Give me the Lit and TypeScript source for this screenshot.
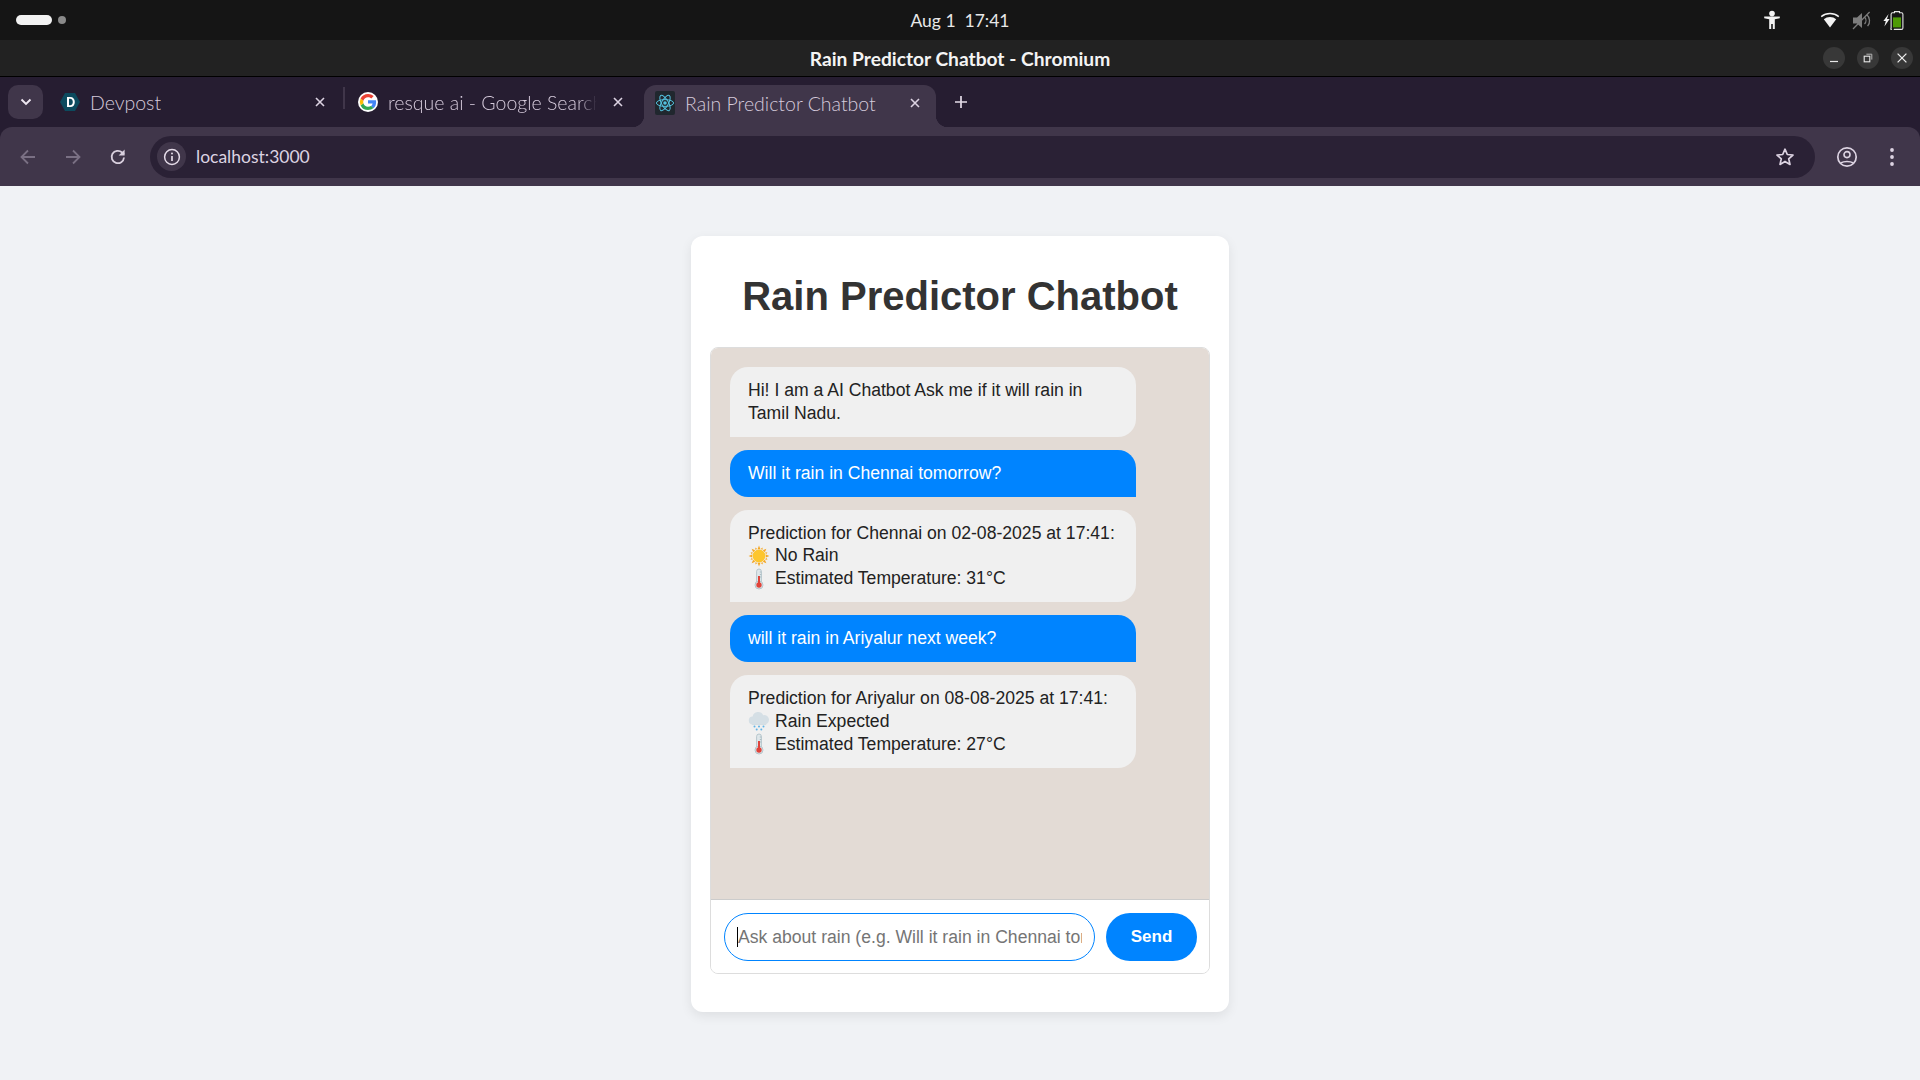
import { LitElement, html, css, svg } from 'lit';
import { customElement } from 'lit/decorators.js';

const sun = html`<svg class="emoji" viewBox="0 0 22 22">
  <g fill="#f5a623">
    ${[0, 45, 90, 135, 180, 225, 270, 315].map(
      a => svg`<path transform="rotate(${a} 11 11)" d="M9.6 4.2 11 .6l1.4 3.6z" />`
    )}
    ${[22, 67, 112, 157, 202, 247, 292, 337].map(
      a => svg`<path transform="rotate(${a} 11 11)" d="M9.9 3.8 11 1.8l1.1 2z" />`
    )}
  </g>
  <circle cx="11" cy="11" r="6.4" fill="#fdc62e" />
</svg>`;

const thermometer = html`<svg class="emoji" viewBox="0 0 22 22">
  <rect x="8.6" y="1" width="4.8" height="15" rx="2.4" fill="#dfe7ea" stroke="#a9bcc4" stroke-width=".8" />
  <circle cx="11" cy="17" r="4" fill="#dfe7ea" stroke="#a9bcc4" stroke-width=".8" />
  <rect x="10" y="8" width="2" height="8" fill="#e0433a" />
  <circle cx="11" cy="17" r="2.7" fill="#e0433a" />
  <path d="M13.2 4h-1.4M13.2 6.5h-1.4M13.2 9h-1.4" stroke="#8fa3ac" stroke-width=".6" />
</svg>`;

const rain = html`<svg class="emoji" viewBox="0 0 22 22">
  <path d="M5 14.5a4 4 0 0 1-.4-8 5.6 5.6 0 0 1 10.6-1.3 4.7 4.7 0 0 1 2 9.3z" fill="#d5dfe5" />
  <path d="M5 14.5a4 4 0 0 1-1.4-.3h15a4.7 4.7 0 0 1-1.4.3z" fill="#a9bcc6" />
  <g fill="#5fb3e6">
    <circle cx="6.5" cy="16.6" r="1" /><circle cx="11" cy="16.6" r="1" /><circle cx="15.5" cy="16.6" r="1" />
    <circle cx="8.7" cy="19.6" r="1" /><circle cx="13.3" cy="19.6" r="1" />
  </g>
</svg>`;

@customElement('browser-chrome')
export class BrowserChrome extends LitElement {
  static styles = css`
    :host {
      display: block;
      font-family: Lato, 'Noto Sans', sans-serif;
      color: #fff;
      background: #261d31;
    }
    * {
      box-sizing: border-box;
    }
    svg {
      display: block;
      flex: none;
    }
    .system-bar {
      height: 40px;
      background: #151515;
      display: grid;
      grid-template-columns: 1fr auto 1fr;
      align-items: center;
      padding: 0 16px;
    }
    .pager {
      display: flex;
      align-items: center;
      gap: 6px;
    }
    .pager__active {
      width: 36px;
      height: 10px;
      border-radius: 5px;
      background: #f2f2f2;
    }
    .pager__dot {
      width: 8px;
      height: 8px;
      border-radius: 50%;
      background: #8a8a8a;
    }
    .clock {
      font-size: 17.5px;
      white-space: pre;
      color: #e8e8e8;
    }
    .tray {
      display: flex;
      justify-content: flex-end;
      align-items: center;
    }
    .tray__a11y {
      margin-right: 39px;
    }
    .tray__wifi,
    .tray__volume {
      margin-right: 12px;
    }
    .title-bar {
      height: 37px;
      background: #222222;
      border-bottom: 1px solid #000;
      display: grid;
      grid-template-columns: 1fr auto 1fr;
      align-items: center;
      padding: 0 7px;
    }
    .title-bar__text {
      font-size: 19.2px;
      font-weight: 700;
      color: #f4f4f4;
    }
    .window-buttons {
      display: flex;
      justify-content: flex-end;
      gap: 12px;
    }
    .window-buttons span {
      width: 22px;
      height: 22px;
      border-radius: 50%;
      background: #383838;
      display: flex;
      align-items: center;
      justify-content: center;
    }
    .tab-strip {
      height: 50px;
      display: flex;
      align-items: flex-end;
      padding-left: 8px;
      color: #d5cadb;
    }
    .tab-list {
      width: 35px;
      height: 34px;
      margin: 0 9px 8px 0;
      border-radius: 10px;
      background: #40364a;
      display: flex;
      align-items: center;
      justify-content: center;
    }
    .tab {
      height: 42px;
      display: flex;
      align-items: center;
      font-size: 19.5px;
      font-weight: 300;
      padding-bottom: 8px;
      position: relative;
      white-space: nowrap;
    }
    .tab__label {
      margin-left: 10px;
      overflow: hidden;
    }
    .tab__close {
      margin-left: auto;
    }
    .tab--devpost {
      width: 291px;
      padding-left: 8px;
      padding-right: 17px;
    }
    .separator {
      width: 2px;
      height: 22px;
      margin-bottom: 18px;
      background: #40364a;
    }
    .tab--google {
      width: 287px;
      padding-left: 13px;
      padding-right: 8px;
    }
    .tab--google .tab__label {
      width: 209px;
      -webkit-mask-image: linear-gradient(90deg, #000 190px, transparent 209px);
      mask-image: linear-gradient(90deg, #000 190px, transparent 209px);
    }
    .tab--active {
      width: 292px;
      margin-left: 12px;
      padding-left: 11px;
      padding-right: 15px;
      padding-bottom: 6px;
      background: #40364a;
      border-radius: 12px 12px 0 0;
    }
    /* little flares where the active tab meets the toolbar */
    .tab--active::before,
    .tab--active::after {
      content: '';
      position: absolute;
      bottom: 0;
      width: 12px;
      height: 12px;
    }
    .tab--active::before {
      left: -12px;
      background: radial-gradient(circle at 0 0, transparent 12px, #40364a 12.5px);
    }
    .tab--active::after {
      right: -12px;
      background: radial-gradient(circle at 100% 0, transparent 12px, #40364a 12.5px);
    }
    .new-tab {
      margin: 0 0 18px 18px;
    }
    .toolbar {
      height: 59px;
      background: #40364a;
      border-radius: 12px 12px 0 0;
      display: flex;
      align-items: center;
      padding-left: 18px;
    }
    .nav {
      display: flex;
      align-items: center;
      gap: 25px;
      margin-right: 22px;
    }
    .omnibox {
      flex: 1;
      height: 42px;
      border-radius: 21px;
      background: #2a2135;
      display: flex;
      align-items: center;
      padding: 0 20px 0 7px;
      font-size: 17.5px;
      color: #dcd3e2;
    }
    .omnibox__info {
      width: 29px;
      height: 29px;
      border-radius: 50%;
      background: #40364a;
      display: flex;
      align-items: center;
      justify-content: center;
      margin-right: 10px;
    }
    .omnibox__url {
      flex: 1;
    }
    .actions {
      display: flex;
      align-items: center;
      gap: 31px;
      padding: 0 25px 0 21px;
    }
  `;

  private get systemBar() {
    return html`<div class="system-bar">
      <div class="pager">
        <span class="pager__active"></span><span class="pager__dot"></span>
      </div>
      <div class="clock">Aug 1  17:41</div>
      <div class="tray">
        <svg class="tray__a11y" width="18" height="20" viewBox="0 0 18 20">
          <circle cx="9" cy="3.6" r="2.8" fill="#f2f2f2" />
          <path
            d="M1.2 6.6h15.6v1.7l-5 .9v9.8H9.8v-5H8.2v5H6.2V9.2l-5-.9z"
            fill="#f2f2f2"
          />
        </svg>
        <svg class="tray__wifi" width="20" height="16" viewBox="0 0 20 16">
          <path d="M10 15.4 3.8 7.2a10 10 0 0 1 12.4 0z" fill="#f2f2f2" />
          <path
            d="M1.2 4.6a14 14 0 0 1 17.6 0"
            fill="none"
            stroke="#f2f2f2"
            stroke-width="1.4"
          />
        </svg>
        <svg class="tray__volume" width="19" height="19" viewBox="0 0 19 19">
          <path d="M1 6.5h4L10 2v15l-5-4.5H1z" fill="#7d7d7d" />
          <path
            d="M12.5 6a5 5 0 0 1 0 7M14.6 3.6a8.2 8.2 0 0 1 1 11.6M1 18 17.6 1"
            fill="none"
            stroke="#7d7d7d"
            stroke-width="1.3"
          />
        </svg>
        <svg width="21" height="20" viewBox="0 0 21 20">
          <path d="M5.6 4 .4 11h2.4l-1.4 5.6L6.6 9H4z" fill="#f2f2f2" />
          <path
            d="M11.5 2.8V1.6h5v1.2h2a1.4 1.4 0 0 1 1.4 1.4V18a1.4 1.4 0 0 1-1.4 1.4h-7A1.4 1.4 0 0 1 8.1 18V4.2a1.4 1.4 0 0 1 1.4-1.4z"
            fill="none"
            stroke="#e6e6e6"
            stroke-width="1.1"
          />
          <rect x="10" y="7.4" width="8" height="10" fill="#4e9a06" />
        </svg>
      </div>
    </div>`;
  }

  private get titleBar() {
    return html`<div class="title-bar">
      <span></span>
      <div class="title-bar__text">Rain Predictor Chatbot - Chromium</div>
      <div class="window-buttons">
        <span>
          <svg width="10" height="10" viewBox="0 0 10 10">
            <path d="M1 8.5h8" stroke="#e8e8e8" stroke-width="1.2" />
          </svg>
        </span>
        <span>
          <svg width="10" height="10" viewBox="0 0 10 10">
            <path d="M3.4 1.2h5.4v5.4" fill="none" stroke="#b5b5b5" stroke-width="1" />
            <rect x="1.2" y="3.2" width="5.6" height="5.6" fill="none" stroke="#e8e8e8" stroke-width="1.1" />
          </svg>
        </span>
        <span>
          <svg width="12" height="12" viewBox="0 0 12 12">
            <path d="M1.6 1.6l8.8 8.8M10.4 1.6l-8.8 8.8" stroke="#ececec" stroke-width="1.3" />
          </svg>
        </span>
      </div>
    </div>`;
  }

  private closeIcon() {
    return html`<svg class="tab__close" width="12" height="12" viewBox="0 0 12 12">
      <path d="M2 2l8 8M10 2l-8 8" stroke="#dcd3e2" stroke-width="1.6" />
    </svg>`;
  }

  private get tabStrip() {
    return html`<div class="tab-strip">
      <div class="tab-list">
        <svg width="12" height="8" viewBox="0 0 12 8">
          <path d="M1.5 1.5 6 6l4.5-4.5" fill="none" stroke="#efe8f2" stroke-width="1.9" />
        </svg>
      </div>
      <div class="tab tab--devpost">
        <svg width="20" height="20" viewBox="0 0 20 20">
          <path d="M5 1h10l5 9-5 9H5l-5-9z" fill="#0c4a5e" />
          <path
            d="M7 5h3.2c3 0 4.6 2 4.6 5s-1.6 5-4.6 5H7zm2 1.8v6.4h1.2c1.7 0 2.6-1.3 2.6-3.2s-.9-3.2-2.6-3.2z"
            fill="#fff"
          />
        </svg>
        <span class="tab__label">Devpost</span>
        ${this.closeIcon()}
      </div>
      <div class="separator"></div>
      <div class="tab tab--google">
        <svg width="20" height="20" viewBox="0 0 20 20">
          <circle cx="10" cy="10" r="10" fill="#fff" />
          <path d="M10 8.3v3.3h4.6a4 4 0 0 1-1.7 2.6l2.7 2.1c1.6-1.5 2.5-3.6 2.5-6.1 0-.6 0-1.3-.2-1.9z" fill="#4285f4" />
          <path d="M5.4 11.3l-.6.5-2.2 1.7A8.3 8.3 0 0 0 10 18.1c2.2 0 4.1-.7 5.6-2l-2.7-2.1c-.7.5-1.7.8-2.9.8a5 5 0 0 1-4.6-3.5z" fill="#34a853" />
          <path d="M2.6 6.5a8.3 8.3 0 0 0 0 7l2.8-2.2a5 5 0 0 1 0-2.6z" fill="#fbbc05" />
          <path d="M10 5.2c1.3 0 2.4.4 3.3 1.3l2.4-2.4A8.1 8.1 0 0 0 10 1.9a8.3 8.3 0 0 0-7.4 4.6l2.8 2.2A5 5 0 0 1 10 5.2z" fill="#ea4335" />
        </svg>
        <span class="tab__label">resque ai - Google Search</span>
        ${this.closeIcon()}
      </div>
      <div class="tab tab--active">
        <svg width="20" height="24" viewBox="0 0 20 24">
          <rect width="20" height="24" rx="2" fill="#20272e" />
          <g fill="none" stroke="#53c1de" stroke-width="1">
            <ellipse cx="10" cy="12" rx="8.6" ry="3.4" />
            <ellipse cx="10" cy="12" rx="8.6" ry="3.4" transform="rotate(60 10 12)" />
            <ellipse cx="10" cy="12" rx="8.6" ry="3.4" transform="rotate(120 10 12)" />
          </g>
          <circle cx="10" cy="12" r="1.8" fill="#53c1de" />
        </svg>
        <span class="tab__label">Rain Predictor Chatbot</span>
        ${this.closeIcon()}
      </div>
      <div class="new-tab">
        <svg width="14" height="14" viewBox="0 0 14 14">
          <path d="M7 1v12M1 7h12" stroke="#e4dbe8" stroke-width="1.7" />
        </svg>
      </div>
    </div>`;
  }

  private get toolbar() {
    return html`<div class="toolbar">
      <div class="nav">
        <svg width="20" height="20" viewBox="0 0 20 20">
          <path d="M17 10H4M10 3.5 3.5 10l6.5 6.5" fill="none" stroke="#7a7084" stroke-width="1.8" />
        </svg>
        <svg width="20" height="20" viewBox="0 0 20 20">
          <path d="M3 10h13M10 3.5l6.5 6.5-6.5 6.5" fill="none" stroke="#7a7084" stroke-width="1.8" />
        </svg>
        <svg width="20" height="20" viewBox="0 0 20 20">
          <path d="M16 10.5a6.2 6.2 0 1 1-1.9-5L16 7.4" fill="none" stroke="#d9d0de" stroke-width="1.8" />
          <path d="M16.6 2.4v6h-6z" fill="#d9d0de" />
        </svg>
      </div>
      <div class="omnibox">
        <div class="omnibox__info">
          <svg width="18" height="18" viewBox="0 0 18 18">
            <circle cx="9" cy="9" r="7.4" fill="none" stroke="#e4dbe8" stroke-width="1.5" />
            <path d="M9 8v5" stroke="#e4dbe8" stroke-width="1.7" />
            <circle cx="9" cy="5.4" r="1" fill="#e4dbe8" />
          </svg>
        </div>
        <div class="omnibox__url">localhost:3000</div>
        <svg width="20" height="20" viewBox="0 0 20 20">
          <path
            d="M10 2.2l2.3 5.3 5.7.5-4.3 3.8 1.3 5.6-5-3-5 3 1.3-5.6L2 8l5.7-.5z"
            fill="none"
            stroke="#dcd3e2"
            stroke-width="1.7"
            stroke-linejoin="round"
          />
        </svg>
      </div>
      <div class="actions">
        <svg width="22" height="22" viewBox="0 0 22 22">
          <circle cx="11" cy="11" r="9.2" fill="none" stroke="#dcd3e2" stroke-width="1.7" />
          <circle cx="11" cy="8.6" r="3" fill="none" stroke="#dcd3e2" stroke-width="1.6" />
          <path d="M4.6 17a9 5 0 0 1 12.8 0" fill="none" stroke="#dcd3e2" stroke-width="1.6" />
        </svg>
        <svg width="6" height="20" viewBox="0 0 6 20">
          <circle cx="3" cy="3" r="1.9" fill="#dcd3e2" />
          <circle cx="3" cy="10" r="1.9" fill="#dcd3e2" />
          <circle cx="3" cy="17" r="1.9" fill="#dcd3e2" />
        </svg>
      </div>
    </div>`;
  }

  render() {
    return html`${this.systemBar} ${this.titleBar} ${this.tabStrip} ${this.toolbar}`;
  }
}

type Message = { from: 'bot' | 'user'; lines: unknown[] };

const MESSAGES: Message[] = [
  { from: 'bot', lines: ['Hi! I am a AI Chatbot Ask me if it will rain in Tamil Nadu.'] },
  { from: 'user', lines: ['Will it rain in Chennai tomorrow?'] },
  {
    from: 'bot',
    lines: [
      'Prediction for Chennai on 02-08-2025 at 17:41:',
      html`${sun}<span>No Rain</span>`,
      html`${thermometer}<span>Estimated Temperature: 31°C</span>`,
    ],
  },
  { from: 'user', lines: ['will it rain in Ariyalur next week?'] },
  {
    from: 'bot',
    lines: [
      'Prediction for Ariyalur on 08-08-2025 at 17:41:',
      html`${rain}<span>Rain Expected</span>`,
      html`${thermometer}<span>Estimated Temperature: 27°C</span>`,
    ],
  },
];

@customElement('app-root')
export class AppRoot extends LitElement {
  static styles = css`
    :host {
      display: flex;
      flex-direction: column;
      min-height: 100vh;
      background: #f0f2f5;
      font-family: 'Liberation Sans', Arial, sans-serif;
    }
    * {
      box-sizing: border-box;
    }
    main {
      display: flex;
      justify-content: center;
      padding-top: 50px;
    }
    .card {
      width: 538px;
      height: 776px;
      padding: 0 19px 38px;
      background: #fff;
      border-radius: 12px;
      box-shadow: 0 4px 12px rgba(0, 0, 0, 0.08);
      display: flex;
      flex-direction: column;
    }
    h1 {
      margin: 0;
      height: 111px;
      line-height: 121px;
      text-align: center;
      font-size: 40px;
      font-weight: 700;
      color: #333;
    }
    .chat {
      flex: 1;
      display: flex;
      flex-direction: column;
      border: 1px solid #ddd;
      border-radius: 8px;
      overflow: hidden;
    }
    .messages {
      flex: 1;
      background: #e3dbd5;
      padding: 19px;
      display: flex;
      flex-direction: column;
      align-items: flex-start;
      gap: 13px;
    }
    .bubble {
      width: 406px;
      padding: 12px 18px;
      font-size: 17.6px;
      line-height: 1.3;
      border-radius: 18px;
    }
    .bubble--bot {
      background: #f0f0f0;
      color: #222;
      border-bottom-left-radius: 0;
    }
    .bubble--user {
      background: #0084ff;
      color: #fff;
      border-bottom-right-radius: 0;
    }
    .bubble__line {
      display: flex;
      align-items: center;
    }
    .emoji {
      width: 22px;
      height: 22px;
      margin-right: 5px;
      flex: none;
    }
    .composer {
      border-top: 1px solid #ccc;
      padding: 13px 12px 12px 13px;
      display: flex;
      gap: 11px;
      background: #fff;
    }
    .field {
      flex: 1;
      min-width: 0;
      position: relative;
    }
    .field__caret {
      position: absolute;
      left: 13px;
      top: 14px;
      width: 1px;
      height: 20px;
      background: #000;
    }
    input {
      display: block;
      width: 100%;
      height: 48px;
      padding: 0 12px 0 13px;
      border: 1px solid #0084ff;
      border-radius: 24px;
      outline: none;
      font: 17.6px 'Liberation Sans', Arial, sans-serif;
      color: #222;
    }
    input::placeholder {
      color: #757575;
    }
    button {
      width: 91px;
      height: 48px;
      border: none;
      border-radius: 24px;
      background: #0084ff;
      color: #fff;
      font: 700 17px 'Liberation Sans', Arial, sans-serif;
    }
  `;

  render() {
    return html`
      <browser-chrome></browser-chrome>
      <main>
        <div class="card">
          <h1>Rain Predictor Chatbot</h1>
          <div class="chat">
            <div class="messages">
              ${MESSAGES.map(
                m => html`<div class="bubble bubble--${m.from}">
                  ${m.lines.map(line => html`<div class="bubble__line">${line}</div>`)}
                </div>`
              )}
            </div>
            <div class="composer">
              <div class="field">
                <input placeholder="Ask about rain (e.g. Will it rain in Chennai tomorrow?)" />
                <span class="field__caret"></span>
              </div>
              <button>Send</button>
            </div>
          </div>
        </div>
      </main>
    `;
  }
}
